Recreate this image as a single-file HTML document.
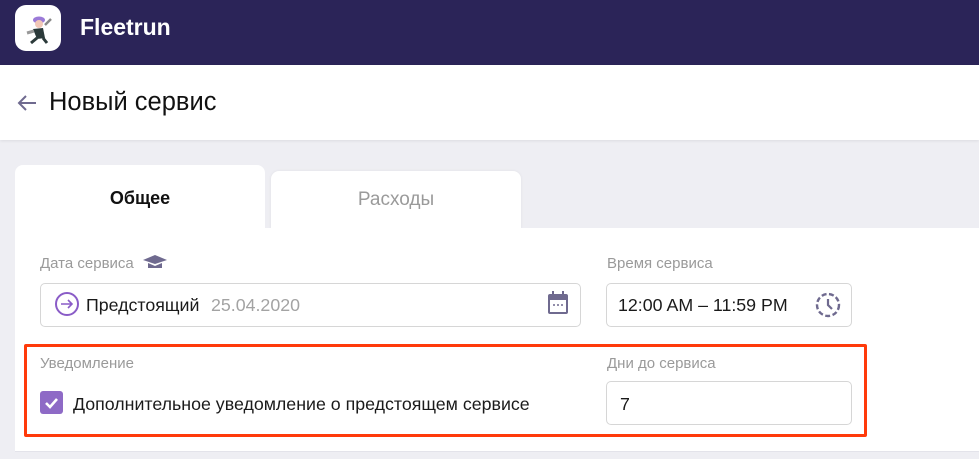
<!DOCTYPE html>
<html><head><meta charset="utf-8"><style>
*{box-sizing:border-box;margin:0;padding:0}
body{width:979px;height:459px;overflow:hidden;background:#eeeef3;font-family:"Liberation Sans",sans-serif;position:relative}
.abs{position:absolute;white-space:nowrap}
.hdr{left:0;top:0;width:979px;height:65px;background:#2b2458}
.logo{left:15px;top:5px;width:46px;height:46px;background:#fff;border-radius:11px}
.brand{left:80px;top:14px;color:#fff;font-weight:bold;font-size:23px}
.bar{left:0;top:65px;width:979px;height:75px;background:#fff;box-shadow:0 1px 3px rgba(0,0,0,.08)}
.title{left:49px;top:88px;font-size:25.5px;color:#111}
.tab{background:#fff;border-radius:8px 8px 0 0;text-align:center;font-size:19px}
.card{left:15px;top:228px;width:964px;height:224px;background:#fff;border-bottom:1px solid #e3e3ea}
.lbl{font-size:15px;color:#9a9a9a}
.inp{background:#fff;border:1px solid #d6d6d6;border-radius:5px}
.txt{font-size:17.8px;color:#1a1a1a}
</style></head><body>
<div class="abs hdr"></div>
<div class="abs logo"><svg width="46" height="46" viewBox="0 0 46 46"><ellipse cx="24" cy="15" rx="6" ry="3.5" fill="#9b7ad8"/><circle cx="24" cy="19" r="4" fill="#f2c8b8"/><path d="M18 24 L28 23 L30 33 L22 34 Z" fill="#2b3a3a"/><path d="M22 33 L16 38 M28 33 L32 38" stroke="#2b3a3a" stroke-width="3"/><path d="M30 20 L36 14" stroke="#888" stroke-width="2.5"/><path d="M12 28 L19 26" stroke="#999" stroke-width="3"/></svg></div>
<div class="abs brand">Fleetrun</div>
<div class="abs bar"></div>
<svg class="abs" style="left:16px;top:93px" width="22" height="20" viewBox="0 0 22 20"><path d="M20 10H3M10 3L3 10L10 17" stroke="#6f6a8f" stroke-width="2" fill="none"/></svg>
<div class="abs title">Новый сервис</div>
<div class="abs tab" style="left:271px;top:171px;width:250px;height:58px;line-height:58px;color:#9a9a9a;box-shadow:0 0 3px rgba(0,0,0,.06)">Расходы</div>
<div class="abs card"></div>
<div class="abs tab" style="left:15px;top:165px;width:250px;height:65px;line-height:66px;color:#111;font-weight:bold;font-size:18px">Общее</div>
<div class="abs lbl" style="left:40px;top:255px">Дата сервиса</div>
<svg class="abs" style="left:142px;top:254px" width="26" height="16" viewBox="0 0 26 16"><path d="M1 6L13 1L25 6L13 10Z" fill="#6f6a8f"/><path d="M6 9V14H20V9L13 12Z" fill="#6f6a8f"/></svg>
<div class="abs inp" style="left:40px;top:283px;width:541px;height:44px"></div>
<svg class="abs" style="left:54px;top:291px" width="26" height="26" viewBox="0 0 26 26"><circle cx="13" cy="13" r="11" stroke="#8a5cc7" stroke-width="2" fill="none"/><path d="M7 13H18M14 9L18 13L14 17" stroke="#8a5cc7" stroke-width="1.6" fill="none"/></svg>
<div class="abs txt" style="left:86px;top:295px">Предстоящий</div>
<div class="abs txt" style="left:211px;top:295px;color:#a3a3a3">25.04.2020</div>
<svg class="abs" style="left:546px;top:290px" width="24" height="26" viewBox="0 0 24 26"><rect x="2" y="4" width="20" height="20" rx="2" fill="#6f6a8f"/><rect x="4" y="10" width="16" height="12" fill="#fff"/><rect x="6" y="1" width="2" height="5" fill="#6f6a8f"/><rect x="16" y="1" width="2" height="5" fill="#6f6a8f"/><circle cx="8" cy="15" r="1" fill="#6f6a8f"/><circle cx="12" cy="15" r="1" fill="#6f6a8f"/><circle cx="16" cy="15" r="1" fill="#6f6a8f"/></svg>
<div class="abs lbl" style="left:607px;top:255px">Время сервиса</div>
<div class="abs inp" style="left:606px;top:283px;width:246px;height:44px"></div>
<div class="abs txt" style="left:618px;top:295px">12:00 AM – 11:59 PM</div>
<svg class="abs" style="left:814px;top:290px" width="28" height="28" viewBox="0 0 28 28"><circle cx="14" cy="15" r="11" stroke="#6f6a8f" stroke-width="2.4" fill="none" stroke-dasharray="5 2.5"/><path d="M14 9V15L18 19" stroke="#6f6a8f" stroke-width="2.2" fill="none"/></svg>
<div class="abs" style="left:24px;top:344px;width:843px;height:93px;border:3px solid #ff3a0a;border-radius:2px"></div>
<div class="abs lbl" style="left:40px;top:355px">Уведомление</div>
<div class="abs" style="left:40px;top:391px;width:23px;height:23px;background:#8e6ac6;border-radius:3px"></div>
<svg class="abs" style="left:40px;top:391px" width="23" height="23" viewBox="0 0 23 23"><path d="M6 12L10 16L17 8" stroke="#fff" stroke-width="2.6" fill="none"/></svg>
<div class="abs txt" style="left:73px;top:394px">Дополнительное уведомление о предстоящем сервисе</div>
<div class="abs lbl" style="left:607px;top:355px">Дни до сервиса</div>
<div class="abs inp" style="left:606px;top:381px;width:246px;height:44px"></div>
<div class="abs txt" style="left:620px;top:394px">7</div>
</body></html>
